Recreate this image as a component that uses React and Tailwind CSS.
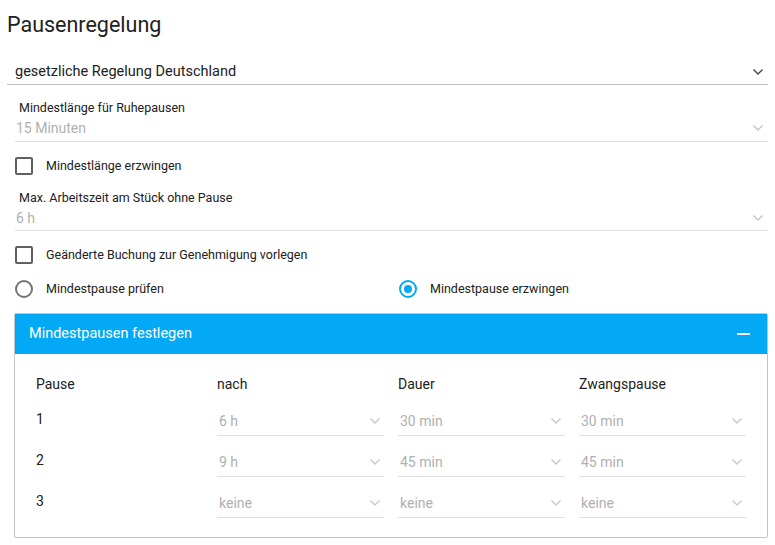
import React from "react";

const Chevron = ({ className = "" }) => (
  <svg width="12" height="8" viewBox="0 0 12 8" className={className}>
    <path d="M1.5 1.5 L6 6 L10.5 1.5" fill="none" stroke="currentColor" strokeWidth="1.4" />
  </svg>
);

const FieldSelect = ({ label, value, pb = "pb-[3px]" }) => (
  <div className={"ml-[15px] mr-[7px] border-b border-[#e0e0e0] " + pb}>
    <div className="mt-[15px] pl-[4px] text-[12.5px] leading-[16px] text-[#212121]">{label}</div>
    <div className="mt-[2px] flex h-[20px] items-center justify-between pl-[1px]">
      <span className="text-[14px] text-[#b0b0b0]">{value}</span>
      <Chevron className="mr-[4px] text-[#c4c4c4]" />
    </div>
  </div>
);

const Checkbox = ({ label, className = "" }) => (
  <div className={"ml-[15px] flex h-[18px] items-center " + className}>
    <div className="h-[18px] w-[18px] rounded-[2px] border-2 border-[#616161]" />
    <span className="ml-[13px] text-[12.5px] text-[#212121]">{label}</span>
  </div>
);

const SmallSelect = ({ value }) => (
  <div className="border-b border-[#e0e0e0] pb-[4px]">
    <div className="mt-[1px] flex h-[20px] items-center justify-between pl-[2px]">
      <span className="text-[14px] text-[#b0b0b0]">{value}</span>
      <Chevron className="mr-[3px] text-[#c8c8c8]" />
    </div>
  </div>
);

export default function App() {
  const rows = [
    ["1", "6 h", "30 min", "30 min"],
    ["2", "9 h", "45 min", "45 min"],
    ["3", "keine", "keine", "keine"],
  ];
  return (
    <div
      className="w-[775px] h-[545px] bg-white text-[#212121]"
      style={{ fontFamily: "Roboto, 'Liberation Sans', sans-serif" }}
    >
      <div className="flex h-[48px] items-center pl-[7px] pt-[3px] text-[21.5px]">Pausenregelung</div>

      <div className="ml-[7px] mr-[7px] border-b border-[#bdbdbd] pt-[12px]">
        <div className="flex h-[24px] items-center justify-between pl-[8px]">
          <span className="text-[14.5px] text-[#212121]">gesetzliche Regelung Deutschland</span>
          <Chevron className="mr-[4px] text-[#424242]" />
        </div>
      </div>

      <FieldSelect label="Mindestlänge für Ruhepausen" value="15 Minuten" />
      <Checkbox label="Mindestlänge erzwingen" className="mt-[15px]" />
      <div className="mt-[1px]">
        <FieldSelect label="Max. Arbeitszeit am Stück ohne Pause" value="6 h" pb="pb-[2px]" />
      </div>
      <Checkbox label="Geänderte Buchung zur Genehmigung vorlegen" className="mt-[15px]" />

      <div className="mt-[16px] ml-[15px] flex h-[18px] items-center">
        <div className="flex w-[384px] items-center">
          <div className="h-[18px] w-[18px] rounded-full border-2 border-[#757575]" />
          <span className="ml-[13px] text-[12.5px]">Mindestpause prüfen</span>
        </div>
        <div className="flex items-center">
          <div className="flex h-[18px] w-[18px] items-center justify-center rounded-full border-2 border-[#03a9f4]">
            <div className="h-[8px] w-[8px] rounded-full bg-[#03a9f4]" />
          </div>
          <span className="ml-[13px] text-[12.5px]">Mindestpause erzwingen</span>
        </div>
      </div>

      <div className="mt-[15px] ml-[14px] mr-[7px] border border-[#c4c4c4] rounded-[2px]">
        <div className="flex h-[40px] items-center justify-between bg-[#03a9f4] pl-[14px] pr-[17px]">
          <span className="text-[14.5px] text-white">Mindestpausen festlegen</span>
          <div className="h-[2px] w-[13px] bg-white" />
        </div>
        <div className="pl-[21px] pr-[20px] pt-[20px] pb-[19px]">
          <div className="grid grid-cols-[167px_167px_167px_167px] gap-x-[14px] gap-y-[15px]">
            <div className="mb-[1px] h-[20px] text-[14px] leading-[20px]">Pause</div>
            <div className="mb-[1px] text-[14px] leading-[20px]">nach</div>
            <div className="mb-[1px] text-[14px] leading-[20px]">Dauer</div>
            <div className="mb-[1px] text-[14px] leading-[20px]">Zwangspause</div>
            {rows.map((r, i) => (
              <React.Fragment key={i}>
                <div className="-mt-[1px] text-[14px] leading-[20px]">{r[0]}</div>
                <SmallSelect value={r[1]} />
                <SmallSelect value={r[2]} />
                <SmallSelect value={r[3]} />
              </React.Fragment>
            ))}
          </div>
        </div>
      </div>
    </div>
  );
}
